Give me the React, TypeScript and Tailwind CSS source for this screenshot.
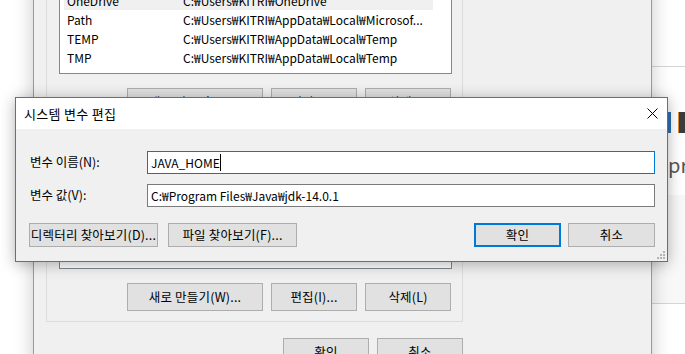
import React from "react";

const FONT = {
  fontFamily: '"Noto Sans CJK KR", "Noto Sans", "Liberation Sans", sans-serif',
};

type Row = { name: string; value: string; selected?: boolean };

const USER_VARS: Row[] = [
  { name: "OneDrive", value: "C:₩Users₩KITRI₩OneDrive", selected: true },
  { name: "Path", value: "C:₩Users₩KITRI₩AppData₩Local₩Microsof..." },
  { name: "TEMP", value: "C:₩Users₩KITRI₩AppData₩Local₩Temp" },
  { name: "TMP", value: "C:₩Users₩KITRI₩AppData₩Local₩Temp" },
];

const WinButton = ({
  children,
  className = "",
  primary = false,
}: {
  children: React.ReactNode;
  className?: string;
  primary?: boolean;
}) => (
  <div
    className={`flex items-center justify-center bg-[#e1e1e1] text-[12.5px] tracking-[0.2px] text-black ${
      primary ? "border-2 border-[#0078d7]" : "border border-[#adadad]"
    } ${className}`}
  >
    {children}
  </div>
);

const ListBox = ({ rows, className = "" }: { rows: Row[]; className?: string }) => (
  <div className={`flex flex-col border border-[#828790] bg-white ${className}`}>
    <div className="h-[20px] shrink-0" />
    {rows.map((row) => (
      <div
        key={row.name}
        className={`ml-[4px] mr-[18px] flex h-[19px] shrink-0 items-center text-[12px] text-black ${
          row.selected ? "bg-[#f0f0f0]" : ""
        }`}
      >
        <span className="w-[119px] pl-[3px]">{row.name}</span>
        <span className="truncate">{row.value}</span>
      </div>
    ))}
  </div>
);

const ButtonRow = () => (
  <div className="flex justify-end gap-[8px]">
    <WinButton className="h-[28px] w-[136px]">새로 만들기(W)...</WinButton>
    <WinButton className="h-[28px] w-[86px]">편집(I)...</WinButton>
    <WinButton className="h-[28px] w-[86px]">삭제(L)</WinButton>
  </div>
);

const EnvWindow = () => (
  <div className="absolute left-[33px] top-[-50px] flex h-[440px] w-[619px] flex-col border-x border-[#9a9a9a] bg-[#f0f0f0] pt-[5px] shadow-[0_0_18px_rgba(0,0,0,0.22)]">
    <div className="ml-[12px] w-[417px] border border-[#dcdcdc] pb-[11px] pl-[12px] pr-[11px] pt-[14px]">
      <ListBox rows={USER_VARS} className="h-[104px] w-[393px]" />
      <div className="mt-[14px]">
        <ButtonRow />
      </div>
    </div>
    <div className="ml-[12px] mt-[12px] w-[417px] border border-[#dcdcdc] pb-[10px] pl-[12px] pr-[11px] pt-[14px]">
      <ListBox rows={[]} className="h-[114px] w-[393px]" />
      <div className="mt-[14px]">
        <ButtonRow />
      </div>
    </div>
    <div className="ml-[12px] mt-[16px] flex w-[417px] justify-end gap-[8px]">
      <WinButton className="h-[28px] w-[86px]">확인</WinButton>
      <WinButton className="h-[28px] w-[86px]">취소</WinButton>
    </div>
  </div>
);

const BrowserBehind = () => (
  <div className="absolute inset-y-0 left-[651px] right-0 flex flex-col bg-white">
    <div className="h-[67px] shrink-0 border-b border-[#d4d4d4]" />
    <div className="flex h-[128px] shrink-0 flex-col pl-[17px] pt-[45px]">
      <div className="flex h-[21px] items-stretch gap-[7px]">
        <div className="w-[3px] bg-[#2f6fb5]" />
        <div className="flex-1 border-l border-[#e08a3c] bg-[#3c3c3c]" />
      </div>
      <div className="mt-[20px] text-[20px] leading-[24px] text-[#555]">pr</div>
    </div>
    <div className="h-[108px] shrink-0 bg-[#f8f8f8]" />
    <div className="flex-1 border-t border-[#d4d4d4] bg-white" />
  </div>
);

const EditDialog = () => (
  <div className="absolute left-[15px] top-[97px] flex h-[165px] w-[653px] flex-col border border-[#6e6e6e] bg-[#f0f0f0] shadow-[0_2px_14px_rgba(0,0,0,0.3)]">
    <div className="flex h-[31px] shrink-0 items-center justify-between bg-white pl-[8px] pr-[9px]">
      <span className="text-[13px] tracking-[0.3px] text-black">시스템 변수 편집</span>
      <svg width="11" height="11" viewBox="0 0 11 11" className="mb-[1px]">
        <path d="M0.5 0.5 L10.5 10.5 M10.5 0.5 L0.5 10.5" stroke="#000" strokeWidth="1" />
      </svg>
    </div>
    <div className="relative flex flex-1 flex-col pl-[13px] pr-[12px] pt-[22px]">
      <div className="flex h-[23px] items-center">
        <span className="w-[118px] pl-[1px] text-[12.5px] text-black">변수 이름(N):</span>
        <div className="flex h-[23px] flex-1 items-center border border-[#0078d7] bg-white pl-[3px] text-[12px] text-black">
          JAVA_HOME
          <span className="h-[17px] w-[1px] bg-black" />
        </div>
      </div>
      <div className="mt-[10px] flex h-[23px] items-center">
        <span className="w-[118px] pl-[1px] text-[12.5px] text-black">변수 값(V):</span>
        <div className="flex h-[23px] flex-1 items-center border border-[#7a7a7a] bg-white pl-[3px] text-[12px] text-black">
          C:₩Program Files₩Java₩jdk-14.0.1
        </div>
      </div>
      <div className="mt-[16px] flex h-[24px] items-center justify-between">
        <div className="flex gap-[10px]">
          <WinButton className="h-[24px] w-[129px]">디렉터리 찾아보기(D)...</WinButton>
          <WinButton className="h-[24px] w-[129px]">파일 찾아보기(F)...</WinButton>
        </div>
        <div className="flex gap-[7px]">
          <WinButton primary className="h-[24px] w-[87px]">
            확인
          </WinButton>
          <WinButton className="h-[24px] w-[87px]">취소</WinButton>
        </div>
      </div>
      <svg width="8" height="8" viewBox="0 0 8 8" className="absolute bottom-[2px] right-[2px]">
        {[
          [6, 0],
          [3, 3],
          [6, 3],
          [0, 6],
          [3, 6],
          [6, 6],
        ].map(([x, y]) => (
          <rect key={`${x}-${y}`} x={x} y={y} width="2" height="2" fill="#b4b4b4" />
        ))}
      </svg>
    </div>
  </div>
);

export default function App() {
  return (
    <div style={FONT} className="relative h-[354px] w-[685px] overflow-hidden bg-white">
      <BrowserBehind />
      <EnvWindow />
      <EditDialog />
    </div>
  );
}
